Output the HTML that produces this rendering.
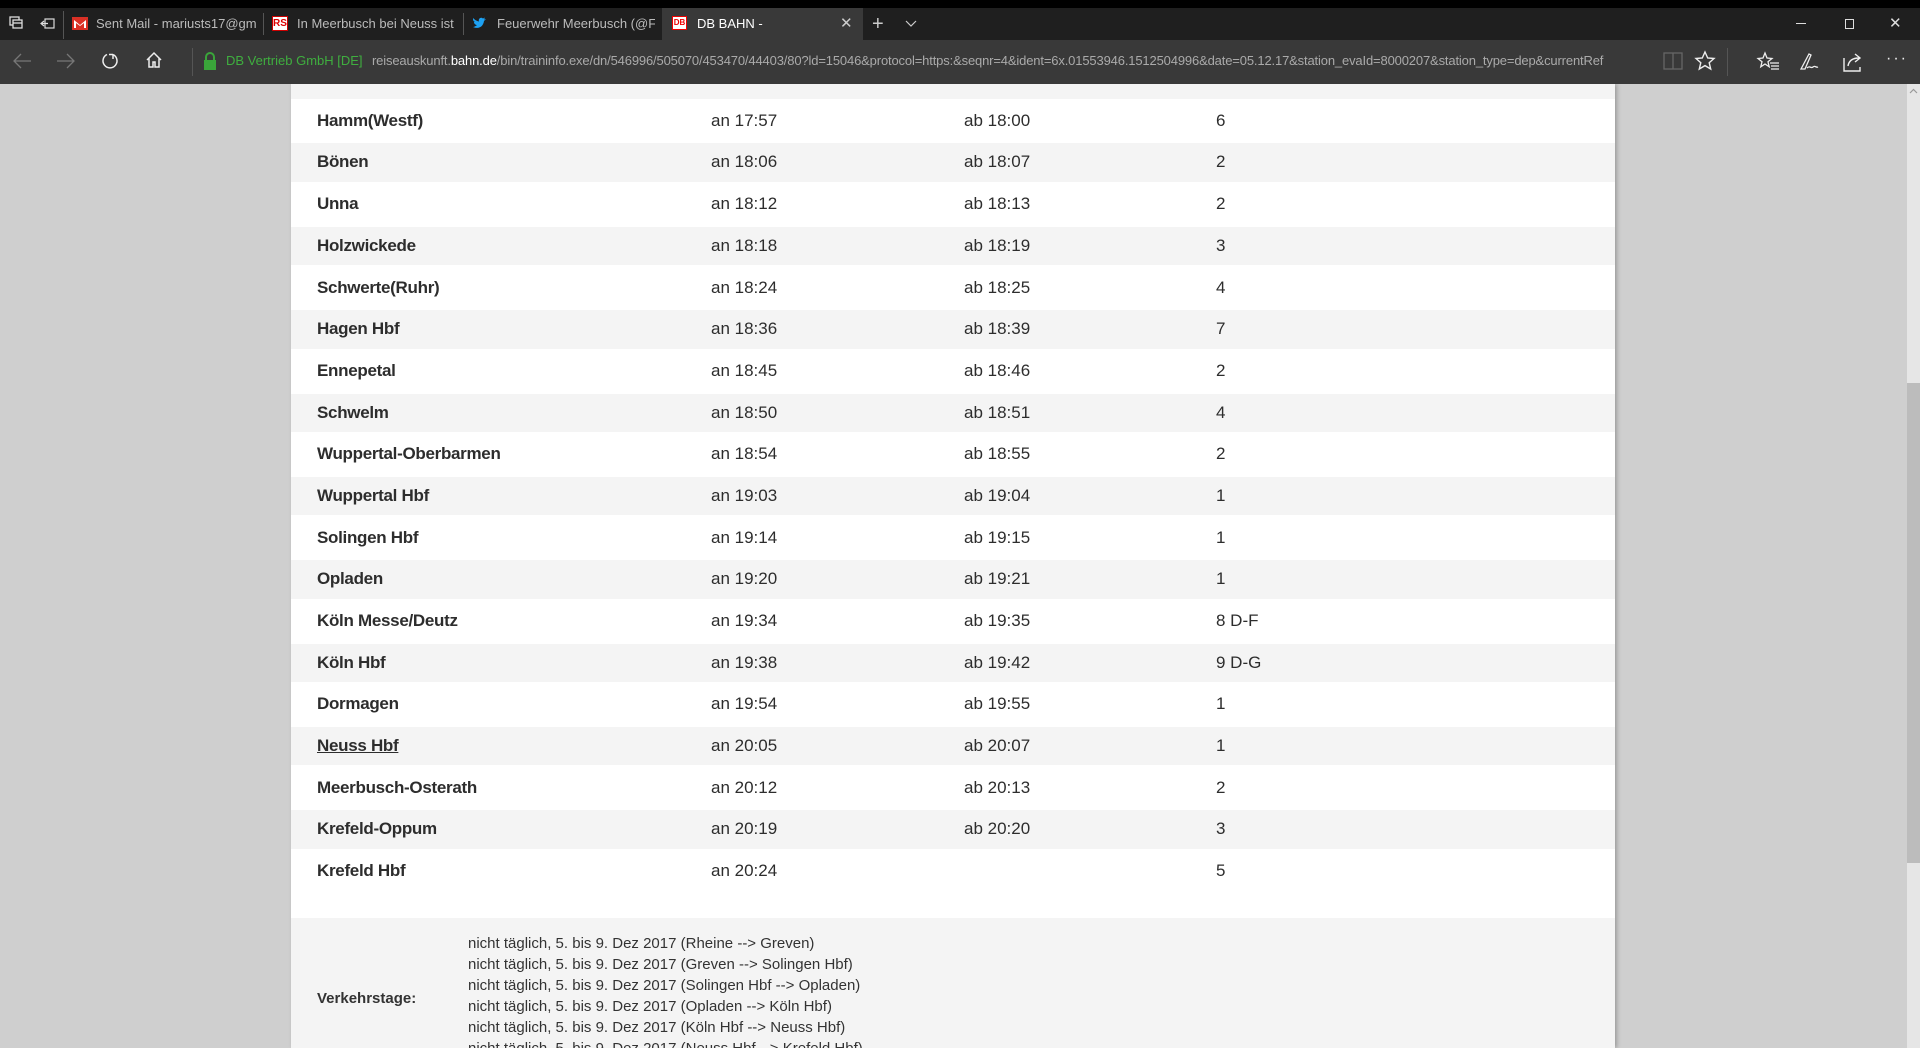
<!DOCTYPE html>
<html><head><meta charset="utf-8"><style>
*{margin:0;padding:0;box-sizing:border-box}
body{width:1920px;height:1048px;overflow:hidden;background:#cfcfcf;position:relative;font-family:"Liberation Sans",sans-serif}
.abs{position:absolute;z-index:2}
#top{left:0;top:0;width:1920px;height:8px;background:#000}
#tabs{left:0;top:8px;width:1920px;height:32px;background:#1f1f1f}
#addr{left:0;top:40px;width:1920px;height:44px;background:#393939}
.tab{position:absolute;z-index:3;top:8px;height:32px;color:#bbb;font-size:13px;line-height:32px;white-space:nowrap;overflow:hidden}
.sep{position:absolute;z-index:3;width:1px;background:#555}
#clip{position:absolute;left:0;top:84px;width:1920px;height:964px;overflow:hidden;z-index:1}
#panel{position:absolute;left:291px;top:0;width:1324px;height:964px;background:#fff;box-shadow:2px 0 4px rgba(0,0,0,.25)}
.row{position:absolute;left:0;width:1324px;font-size:17px;color:#2d2d2d}
.row span{position:absolute;top:50%;transform:translateY(-50%);white-space:nowrap}
.n{left:26px;font-weight:bold;letter-spacing:-0.3px}
.a{left:420px}.b{left:673px}.p{left:925px}
.g{background:#f4f4f4}
#vk{position:absolute;left:0;top:834px;width:1324px;height:140px;background:#f4f4f4;font-size:15px;color:#333}
#vk div{position:absolute;left:177px;white-space:nowrap}
#sb{left:1907px;top:84px;width:13px;height:964px;background:#e6e6e6}
#th{left:1907px;top:383px;width:13px;height:480px;background:#bcbcbc}
svg.abs,div.abs{z-index:3}
#top,#tabs,#addr{z-index:2}
</style></head><body>
<div id="top" class="abs"></div>
<div id="tabs" class="abs"></div>
<div id="addr" class="abs"></div>
<svg class="abs" style="left:8px;top:15px" width="18" height="18" viewBox="0 0 18 18" fill="none" stroke="#ddd" stroke-width="1.3"><rect x="2" y="2" width="9" height="8"/><rect x="5" y="5" width="9" height="8" fill="#1f1f1f"/><line x1="5" y1="8" x2="14" y2="8"/></svg>
<svg class="abs" style="left:39px;top:15px" width="18" height="18" viewBox="0 0 18 18" fill="none" stroke="#ddd" stroke-width="1.2"><rect x="6" y="4" width="9" height="9"/><path d="M2 8.5h7M5 6l-3 2.5 3 2.5"/></svg>
<div class="sep" style="left:63px;top:11px;height:28px"></div>
<svg class="abs" style="left:72px;top:17px" width="16" height="13" viewBox="0 0 16 13"><rect width="16" height="13" fill="#d93025"/><path d="M2 3l6 5 6-5v8h-2V6L8 9 4 6v5H2z" fill="#fff"/></svg>
<div class="tab" style="left:96px;width:160px">Sent Mail - mariusts17@gm</div>
<div class="sep" style="left:263px;top:13px;height:22px"></div>
<div class="abs" style="left:272px;top:16px;width:16px;height:15px;background:#fff;border:1px solid #c00;color:#d00;font:bold 10px/13px 'Liberation Sans',sans-serif;text-align:center">RS</div>
<div class="tab" style="left:297px;width:160px">In Meerbusch bei Neuss ist</div>
<div class="sep" style="left:463px;top:13px;height:22px"></div>
<svg class="abs" style="left:472px;top:16px" width="16" height="15" viewBox="0 0 16 15"><path d="M1 11c4 2 10 1 11-6l2-2-2 .5 1-2-2 1c-2-2-5 0-4 3C4 5 2 3 1 2c0 2 0 3 2 4H2c0 2 2 3 3 3-1 1-3 2-4 2z" fill="#1da1f2"/></svg>
<div class="tab" style="left:497px;width:158px">Feuerwehr Meerbusch (@FV</div>
<div class="abs" style="left:662px;top:8px;width:201px;height:32px;background:#393939"></div>
<div class="abs" style="left:672px;top:16px;width:15px;height:14px;background:#fff;border:1.5px solid #e00;color:#e00;font:bold 8px/11px 'Liberation Sans',sans-serif;text-align:center">DB</div>
<div class="tab" style="left:697px;color:#fff">DB BAHN -</div>
<div class="tab" style="left:840px;color:#ccc;font-size:15px">✕</div>
<div class="tab" style="left:872px;color:#ccc;font-size:20px">+</div>
<svg class="abs" style="left:905px;top:20px" width="12" height="8" viewBox="0 0 12 8" fill="none" stroke="#ccc" stroke-width="1.2"><path d="M1 1l5 5 5-5"/></svg>
<div class="abs" style="left:1796px;top:23px;width:10px;height:1px;background:#ddd"></div>
<div class="abs" style="left:1845px;top:19px;width:9px;height:10px;border:1px solid #ddd"></div>
<div class="tab" style="left:1889px;color:#ddd;font-size:15px">✕</div>
<svg class="abs" style="left:12px;top:52px" width="20" height="18" viewBox="0 0 20 18" fill="none" stroke="#777" stroke-width="1.3"><path d="M19 9H2M9 2L2 9l7 7"/></svg>
<svg class="abs" style="left:56px;top:52px" width="20" height="18" viewBox="0 0 20 18" fill="none" stroke="#777" stroke-width="1.3"><path d="M1 9h17M11 2l7 7-7 7"/></svg>
<svg class="abs" style="left:100px;top:51px" width="20" height="20" viewBox="0 0 20 20" fill="none" stroke="#eee" stroke-width="1.5"><path d="M7 3.5A7 7 0 1 0 13 3.5M13 3.5V8M13 3.5H9"/></svg>
<svg class="abs" style="left:145px;top:51px" width="18" height="18" viewBox="0 0 18 18" fill="none" stroke="#eee" stroke-width="1.5"><path d="M2 9L9 2l7 7M4 7v9h4v-5h2v5h4V7"/></svg>
<div class="sep" style="left:192px;top:48px;height:28px;background:#555"></div>
<svg class="abs" style="left:203px;top:52px" width="14" height="18" viewBox="0 0 14 18"><path d="M3 8V5a4 4 0 0 1 8 0v3" fill="none" stroke="#3aa53a" stroke-width="2"/><rect x="1" y="8" width="12" height="10" fill="#3aa53a"/></svg>
<div class="abs" style="left:226px;top:53px;color:#3fae3f;font-size:13px;white-space:nowrap">DB Vertrieb GmbH [DE]</div>
<div class="abs" style="left:372px;top:53px;color:#aaa;font-size:13px;white-space:nowrap;width:1276px;overflow:hidden;letter-spacing:-0.15px">reiseauskunft.<span style="color:#fff">bahn.de</span>/bin/traininfo.exe/dn/546996/505070/453470/44403/80?ld=15046&amp;protocol=https:&amp;seqnr=4&amp;ident=6x.01553946.1512504996&amp;date=05.12.17&amp;station_evaId=8000207&amp;station_type=dep&amp;currentRef</div>
<svg class="abs" style="left:1663px;top:52px" width="20" height="18" viewBox="0 0 20 18" fill="none" stroke="#666" stroke-width="1.3"><rect x="1" y="1" width="18" height="16"/><line x1="10" y1="1" x2="10" y2="17"/></svg>
<svg class="abs" style="left:1694px;top:50px" width="22" height="22" viewBox="0 0 22 22" fill="none" stroke="#eee" stroke-width="1.4"><path d="M11 2l2.7 6 6.3.5-4.8 4.2 1.5 6.3L11 15.6 5.3 19l1.5-6.3L2 8.5 8.3 8z"/></svg>
<div class="sep" style="left:1727px;top:48px;height:28px;background:#555"></div>
<svg class="abs" style="left:1756px;top:51px" width="24" height="22" viewBox="0 0 24 22" fill="none" stroke="#eee" stroke-width="1.3"><path d="M9 2l2 5 5 .5-4 3.3 1.2 5L9 13l-4.2 2.8 1.2-5-4-3.3 5-.5z"/><path d="M14 12h9M15 15h8M15 18h8"/></svg>
<svg class="abs" style="left:1798px;top:51px" width="22" height="22" viewBox="0 0 22 22" fill="none" stroke="#eee" stroke-width="1.3"><path d="M3 18L11 3l2 1-6 14zM9 17c3-3 4 1 6-1s3 1 5 0"/></svg>
<svg class="abs" style="left:1842px;top:51px" width="22" height="22" viewBox="0 0 22 22" fill="none" stroke="#eee" stroke-width="1.4"><path d="M2 7v13h16v-4M6 15c1-6 5-8 11-8M13 3l5 4-5 4"/></svg>
<div class="abs" style="left:1886px;top:50px;color:#eee;font-size:16px;letter-spacing:2px">···</div>
<div id="clip">
<div id="panel">
<div class="row g" style="top:-24px;height:39px"><span class="n" style="top:2px">Beckum-Neubeckum</span></div>
<div class="row" style="top:15px;height:44.5px"><span class="n">Hamm(Westf)</span><span class="a">an 17:57</span><span class="b">ab 18:00</span><span class="p">6</span></div>
<div class="row g" style="top:59px;height:38.8px"><span class="n">Bönen</span><span class="a">an 18:06</span><span class="b">ab 18:07</span><span class="p">2</span></div>
<div class="row" style="top:98px;height:44.5px"><span class="n">Unna</span><span class="a">an 18:12</span><span class="b">ab 18:13</span><span class="p">2</span></div>
<div class="row g" style="top:142.5px;height:38.8px"><span class="n">Holzwickede</span><span class="a">an 18:18</span><span class="b">ab 18:19</span><span class="p">3</span></div>
<div class="row" style="top:181.5px;height:44.5px"><span class="n">Schwerte(Ruhr)</span><span class="a">an 18:24</span><span class="b">ab 18:25</span><span class="p">4</span></div>
<div class="row g" style="top:226px;height:38.8px"><span class="n">Hagen Hbf</span><span class="a">an 18:36</span><span class="b">ab 18:39</span><span class="p">7</span></div>
<div class="row" style="top:265px;height:44.5px"><span class="n">Ennepetal</span><span class="a">an 18:45</span><span class="b">ab 18:46</span><span class="p">2</span></div>
<div class="row g" style="top:309.5px;height:38.8px"><span class="n">Schwelm</span><span class="a">an 18:50</span><span class="b">ab 18:51</span><span class="p">4</span></div>
<div class="row" style="top:348px;height:44.5px"><span class="n">Wuppertal-Oberbarmen</span><span class="a">an 18:54</span><span class="b">ab 18:55</span><span class="p">2</span></div>
<div class="row g" style="top:392.5px;height:38.8px"><span class="n">Wuppertal Hbf</span><span class="a">an 19:03</span><span class="b">ab 19:04</span><span class="p">1</span></div>
<div class="row" style="top:431.5px;height:44.5px"><span class="n">Solingen Hbf</span><span class="a">an 19:14</span><span class="b">ab 19:15</span><span class="p">1</span></div>
<div class="row g" style="top:476px;height:38.8px"><span class="n">Opladen</span><span class="a">an 19:20</span><span class="b">ab 19:21</span><span class="p">1</span></div>
<div class="row" style="top:515px;height:44.5px"><span class="n">Köln Messe/Deutz</span><span class="a">an 19:34</span><span class="b">ab 19:35</span><span class="p">8 D-F</span></div>
<div class="row g" style="top:559.5px;height:38.8px"><span class="n">Köln Hbf</span><span class="a">an 19:38</span><span class="b">ab 19:42</span><span class="p">9 D-G</span></div>
<div class="row" style="top:598px;height:44.5px"><span class="n">Dormagen</span><span class="a">an 19:54</span><span class="b">ab 19:55</span><span class="p">1</span></div>
<div class="row g" style="top:642.5px;height:38.8px"><span class="n" style="text-decoration:underline">Neuss Hbf</span><span class="a">an 20:05</span><span class="b">ab 20:07</span><span class="p">1</span></div>
<div class="row" style="top:681.5px;height:44.5px"><span class="n">Meerbusch-Osterath</span><span class="a">an 20:12</span><span class="b">ab 20:13</span><span class="p">2</span></div>
<div class="row g" style="top:726px;height:38.8px"><span class="n">Krefeld-Oppum</span><span class="a">an 20:19</span><span class="b">ab 20:20</span><span class="p">3</span></div>
<div class="row" style="top:765px;height:44.5px"><span class="n">Krefeld Hbf</span><span class="a">an 20:24</span><span class="p">5</span></div>
<div id="vk">
<div style="left:26px;top:72px;font-weight:bold;font-size:15px">Verkehrstage:</div>
<div style="top:17px">nicht täglich, 5. bis 9. Dez 2017 (Rheine --&gt; Greven)</div>
<div style="top:38px">nicht täglich, 5. bis 9. Dez 2017 (Greven --&gt; Solingen Hbf)</div>
<div style="top:59px">nicht täglich, 5. bis 9. Dez 2017 (Solingen Hbf --&gt; Opladen)</div>
<div style="top:80px">nicht täglich, 5. bis 9. Dez 2017 (Opladen --&gt; Köln Hbf)</div>
<div style="top:101px">nicht täglich, 5. bis 9. Dez 2017 (Köln Hbf --&gt; Neuss Hbf)</div>
<div style="top:122px">nicht täglich, 5. bis 9. Dez 2017 (Neuss Hbf --&gt; Krefeld Hbf)</div>
</div>
</div>
</div>
<div id="sb" class="abs"></div>
<div id="th" class="abs"></div>
<svg class="abs" style="left:1909px;top:88px" width="9" height="6" viewBox="0 0 9 6" fill="none" stroke="#999" stroke-width="1.2"><path d="M1 5l3.5-3.5L8 5"/></svg>
</body></html>
